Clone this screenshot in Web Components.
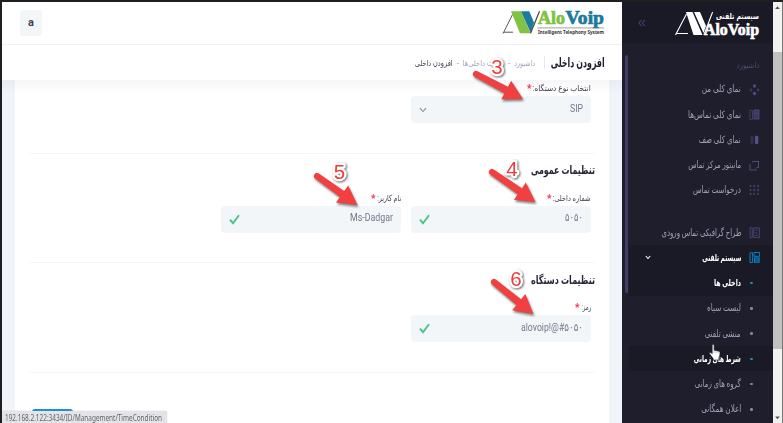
<!DOCTYPE html>
<html lang="fa"><head><meta charset="utf-8"><title>AloVoip</title>
<style>
html,body{margin:0;height:100%;overflow:hidden}
body{font-family:Roboto,"DejaVu Sans",sans-serif;background:#fff}
</style></head><body>
<app-shell></app-shell>
<script>
const define=(name,html,ready)=>customElements.define(name,class extends HTMLElement{
  connectedCallback(){
    if(this.shadowRoot)return;
    const t=document.createElement('template');
    t.innerHTML=typeof html==='function'?html(this):html;
    this.attachShadow({mode:'open'}).append(t.content.cloneNode(true));
    if(ready)ready(this);
  }
});

/* One line of text condensed to the width given in "w". */
define('fit-text',el=>`<style>
:host{display:inline-flex;flex:none;width:${el.getAttribute('w')}px;white-space:nowrap;line-height:16px;height:16px}
span{flex:none;display:block;transform-origin:${el.hasAttribute('ltr')?'left':'right'} center;direction:${el.hasAttribute('ltr')?'ltr':'rtl'}}
:host([ltr]){direction:ltr}:host(:not([ltr])){direction:rtl}
</style><span></span>`,el=>{
  const s=el.shadowRoot.querySelector('span');
  s.textContent=el.getAttribute('text');
  const n=s.getBoundingClientRect().width;
  if(n)s.style.transform=`scaleX(${+el.getAttribute('w')/n})`;
});

const icons={
  dots4:'<g fill="#4b4b80"><circle cx="5.5" cy="2" r="1.7"/><circle cx="5.5" cy="9.5" r="1.7"/><circle cx="2" cy="6" r="1.4" opacity=".6"/><circle cx="9" cy="6" r="1.4" opacity=".6"/></g>',
  phone:'<path d="M1 1.5h2.5v9H1z" fill="none" stroke="#3d3d68"/><path d="M4.5.5h6v10h-6z" fill="#45456f"/><path d="M5.5 3h4M5.5 6h4M5.5 8.2h4" stroke="#2a2a48" stroke-width=".8"/>',
  bars:'<rect x="1.5" y="2" width="3" height="8" rx="1" fill="#303052"/><rect x="6" y="1.800" width="3.300" height="8.200" rx="1.200" fill="#53538a"/>',
  copy:'<path d="M3.500 1.500h6v6h-2M3.500 1.500v1M1 4v6h6V8.500" fill="none" stroke="#4b4b78" stroke-width="1.100"/>',
  grid:'<g fill="#4b4b78">'+[1,5,9].map(y=>[1.5,5.3,9.1].map(x=>`<circle cx="${x}" cy="${y}" r=".9"/>`).join('')).join('')+'</g><path d="M1 5h9M5.300 1v9M9.100 1v9" stroke="#353558" stroke-width=".5"/>',
  flow:'<path d="M1 .8h2.300v9.700H1zM4.800.8h5.600v9.700H4.800zM6 3h3M6 5l3 2.500M6.500 8.500h2" fill="none" stroke="#47476f" stroke-width=".9"/>',
  phoneOn:'<path d="M1 .8h2.600v9.700H1z" fill="none" stroke="#087fc0"/><path d="M5 .5h5.600v3.800H5z" fill="none" stroke="#087fc0"/><path d="M5 5.300h5.700v5.500H5z" fill="#087fc0"/><path d="M6 7h3.700M6 9h3.700" stroke="#1a1a27" stroke-width=".8"/>'
};

define('nav-item',el=>{
  const ic=el.getAttribute('icon'),on=el.hasAttribute('on');
  return `<style>
:host{display:flex;align-items:center;height:25.25px;color:#a0a2b6;font-size:10px;direction:rtl;padding:0 13px 0 16px;box-sizing:border-box;flex:none}
:host([on]){color:#fff;font-weight:700;font-size:9.500px}
:host([dark]){background:#1a1a27}
.i{width:12px;height:12px;margin-left:7px;display:flex;align-items:center;justify-content:center}
.b{width:2.600px;height:2.600px;border-radius:50%;background:${on?'#0b91d8':'#8587a0'};margin-right:5px}
.c{margin-right:auto}
</style><div class="i">${ic?`<svg width="11" height="11" viewBox="0 0 11 11">${icons[ic]}</svg>`:'<div class="b"></div>'}</div>
<fit-text w="${el.getAttribute('w')}" text="${el.getAttribute('label')}"></fit-text>
${el.hasAttribute('open-menu')?'<svg class="c" width="6" height="5" viewBox="0 0 6 5"><path d="M.8 1 3 3.500 5.200 1" fill="none" stroke="#fff" stroke-width="1.100"/></svg>':''}`});

define('side-bar',`<style>
:host{display:flex;flex-direction:column;width:151px;background:#1e1e2d;box-sizing:border-box;overflow:hidden}
.brand{height:42px;flex:none;background:#1a1a27;display:flex;direction:ltr;align-items:center;padding-left:16px;border-bottom:1px solid #1c1c2a;box-sizing:border-box}
.brand .lg{margin-left:28px;overflow:visible}
.body{display:flex;direction:ltr;flex:1;min-height:0}
.track{width:3px;height:238px;margin:11px 1px 0 3px;background:#3d3d66;border-radius:2px;flex:none}
.menu{flex:1;display:flex;flex-direction:column;min-width:0;direction:rtl}
.sec{height:22px;padding:14px 14px 0 0;color:#4c4e6f;font-size:8px;flex:none;box-sizing:border-box;margin-bottom:10.700px}
.gap{height:17px;flex:none}
</style>
<div class="brand"><svg width="8" height="8" viewBox="0 0 8 8"><path d="M3.500.8.8 4l2.700 3.200M7 .8 4.300 4 7 7.200" fill="none" stroke="#4c4e80"/></svg>
<svg class="lg" width="87" height="30" viewBox="674 8 87 30">
<path d="M675.500 35 686.500 14M676 33.500h12M704 34.500 712.600 12" stroke="#fff" stroke-width="1.100" fill="none"/>
<path d="M686 12h6.500l10 23h-9zM694 12h6l6 14-2.500 7z" fill="#fff"/>
<text x="716" y="19" font-size="8.500" font-weight="700" fill="#fff" font-family="DejaVu Sans" textLength="43" lengthAdjust="spacingAndGlyphs">سیستم تلفنی</text>
<text x="704" y="34.800" font-size="16" font-weight="700" fill="#fff" stroke="#fff" stroke-width=".6" font-family="Liberation Serif" textLength="55" lengthAdjust="spacingAndGlyphs">AloVoip</text></svg></div>
<div class="body"><div class="track"></div><div class="menu">
<div class="sec"><fit-text w="23" text="داشبورد"></fit-text></div>
<nav-item icon="dots4" w="39" label="نمای کلی من"></nav-item>
<nav-item icon="phone" w="53" label="نمای کلی تماس‌ها"></nav-item>
<nav-item icon="bars" w="42" label="نمای کلی صف"></nav-item>
<nav-item icon="copy" w="53" label="مانیتور مرکز تماس"></nav-item>
<nav-item icon="grid" w="48" label="درخواست تماس"></nav-item>
<div class="gap"></div>
<nav-item icon="flow" w="80" label="طراح گرافیکی تماس ورودی"></nav-item>
<nav-item icon="phoneOn" on dark open-menu w="39" label="سیستم تلفنی"></nav-item>
<nav-item on dark w="27" label="داخلی ها"></nav-item>
<nav-item w="34" label="لیست سیاه"></nav-item>
<nav-item w="36" label="منشی تلفنی"></nav-item>
<nav-item on dark w="47" label="شرط های زمانی"></nav-item>
<nav-item w="46" label="گروه های زمانی"></nav-item>
<nav-item w="40" label="اعلان همگانی"></nav-item>
</div></div>`);

define('page-scroll',`<style>
:host{display:flex;flex-direction:column;align-items:center;width:10px;background:#f1f1f1;border-right:1px solid #777;box-sizing:border-box}
svg{flex:none}.th{width:100%;height:297px;margin-top:36px;background:#c1c1c1}.dn{margin-top:auto;margin-bottom:1px}
</style><svg width="9" height="14" viewBox="0 0 9 14"><path d="M2.200 7 4.500 4.300 6.800 7z" fill="#505050"/></svg><div class="th"></div>
<svg class="dn" width="9" height="9" viewBox="0 0 9 9"><path d="M2.200 3.500h4.600L4.500 6.200z" fill="#505050"/></svg>`);

define('top-header',`<style>
:host{display:flex;direction:rtl;justify-content:space-between;align-items:center;height:43px;flex:none;padding:0 16px 0 18px;border-bottom:1px solid #eff0f4;box-sizing:border-box;background:#fff}
svg{direction:ltr;overflow:visible}
.u{width:22px;height:26px;border-radius:3px;background:#f3f6f9;color:#3f4254;font:700 11px/25px Roboto;text-align:center}
</style><svg width="104" height="30" viewBox="502 9 104 30">
<path d="M503 34.700 512.500 15.500M504 33.200h9" stroke="#55595e" stroke-width="1" fill="none"/>
<path d="M511 12.200h10l9.500 22H520z" fill="#80c242"/><path d="M521 12.200h8.300L534 23.500l-3.500 10z" fill="#1c7a9c"/>
<path d="M530.500 34.200 539.500 12.200" stroke="#40454a" stroke-width="1.200"/>
<text x="538" y="24.500" font-family="Liberation Serif" font-weight="700" font-size="18" stroke-width=".7" fill="#80c242" stroke="#80c242" textLength="27" lengthAdjust="spacingAndGlyphs">Alo</text>
<text x="565.500" y="24.500" font-family="Liberation Serif" font-weight="700" font-size="18" stroke-width=".7" fill="#1c7a9c" stroke="#1c7a9c" textLength="38.500" lengthAdjust="spacingAndGlyphs">Voip</text>
<path d="M537.500 28.900H604" stroke="#777" stroke-width=".7"/>
<text x="538" y="34.900" font-family="Noto Sans" font-weight="700" font-size="5.600" fill="#333" textLength="66" lengthAdjust="spacingAndGlyphs">Intelligent Telephony System</text>
</svg><div class="u">a</div>`);

define('sub-header',`<style>
:host{display:flex;direction:rtl;align-items:center;height:35px;flex:none;background:#fff;padding-right:17px;font-size:8.500px;color:#a3a6ba}
.t{font-size:12.500px;font-weight:700;color:#20212f;margin-left:6px}
.s{width:1px;height:13px;background:#e6e8ef;margin-left:9px}
.d{width:10px;text-align:center;flex:none}.l{color:#3f4254}
</style><fit-text class="t" w="54" text="افزودن داخلی"></fit-text><div class="s"></div>
<fit-text w="21" text="داشبورد"></fit-text><span class="d">-</span><fit-text w="41" text="لیست داخلی‌ها"></fit-text><span class="d">-</span><fit-text class="l" w="38" text="افزودن داخلی"></fit-text>`);

define('form-field',el=>`<style>
:host{display:flex;flex-direction:column;width:180px;direction:rtl;flex:none}
.l{height:16px;display:flex;align-items:center;font-size:8.500px;color:#3f4254}
b{color:#f0304d;font-size:10px;margin-right:1.500px;height:12px;line-height:14px}
.b{height:27px;border-radius:4px;background:#f3f6f9;display:flex;align-items:center;justify-content:space-between;padding:0 8px 2px;box-sizing:border-box;color:#74788c;font-size:10.500px}
svg{position:relative;top:1px}
</style><div class="l"><fit-text w="${el.getAttribute('lw')}" text="${el.getAttribute('label')}"></fit-text><b>*</b></div>
<div class="b"><fit-text ltr w="${el.getAttribute('vw')}" text="${el.getAttribute('value')}"></fit-text>
${el.hasAttribute('select')?'<svg width="8" height="6" viewBox="0 0 8 6"><path d="M1 1.200 4 4.500 7 1.200" fill="none" stroke="#858b9c" stroke-width="1.100"/></svg>'
:'<svg width="11" height="11" viewBox="0 0 11 11"><path d="M1 5.600 4 9.200 10 1.300" fill="none" stroke="#45c486" stroke-width="1.900"/></svg>'}</div>`);

define('form-section',el=>`<style>
:host{display:block;direction:rtl;border-top:1px solid #f4f5f8;height:109.500px;box-sizing:border-box;flex:none}
:host([first]){border:0;height:72.500px}
.h{height:36px;padding-bottom:3px;box-sizing:border-box;display:flex;align-items:center;font-size:11.500px;font-weight:700;color:#252637}
.r{display:flex;gap:10px;padding-right:4px}
</style>${el.getAttribute('title-text')?`<div class="h"><fit-text w="${el.getAttribute('tw')}" text="${el.getAttribute('title-text')}"></fit-text></div>`:''}<div class="r"><slot></slot></div>`);

define('main-pane',`<style>
:host{display:flex;flex-direction:column;flex:1;min-width:0;background:#f1f4f9}
.w{flex:1;min-height:0;padding:0 13px;position:relative;overflow:hidden;display:flex}
.w::before{content:"";position:absolute;inset:0 0 auto 0;height:14px;background:linear-gradient(rgba(90,95,125,.055),transparent);z-index:1}
.card{flex:1;background:#fff;padding:0 14px;display:flex;flex-direction:column;direction:rtl;box-sizing:border-box}
.end{border-top:1px solid #f4f5f8;padding:36px 0 0 3px;direction:ltr}
.btn{width:41px;height:26px;background:#1790d8;border-radius:3px}
</style><top-header></top-header><sub-header></sub-header>
<div class="w"><div class="card">
<form-section first><form-field select label="انتخاب نوع دستگاه:" lw="58" value="SIP" vw="13"></form-field></form-section>
<form-section title-text="تنظیمات عمومی" tw="64"><form-field label="شماره داخلی:" lw="38" value="۵۰۵۰" vw="18"></form-field><form-field label="نام کاربر:" lw="24" value="Ms-Dadgar" vw="43"></form-field></form-section>
<form-section title-text="تنظیمات دستگاه" tw="64"><form-field label="رمز:" lw="10" value="alovoip!@#۵۰۵۰" vw="62"></form-field></form-section>
<div class="end"><div class="btn"></div></div>
</div></div>`);

/* Numbered callout: the figure and its arrow lie over the form.
   The arrow runs from near (3,4) to the tip (tx,ty). */
define('step-mark',el=>{
  const tx=+el.getAttribute('tx'),ty=+el.getAttribute('ty');
  const len=Math.hypot(tx-3,ty-4),ang=Math.atan2(ty-4,tx-3)*180/Math.PI;
  const h=len-19;
  return `<style>
:host{position:absolute;width:70px;height:60px;left:${el.getAttribute('x')}px;top:${el.getAttribute('y')}px;direction:ltr}
svg{display:block;overflow:visible}
.a{filter:drop-shadow(1px 2px 1px rgba(0,0,0,.5))}
.n{filter:drop-shadow(1px 1.500px 1px rgba(0,0,0,.6))}
</style><svg width="70" height="60" viewBox="0 0 70 60">
<g class="a"><path transform="translate(3 4) rotate(${ang})" d="M0-3.100 ${h} -3.700V-10.500L${len} 0 ${h} 10.500V3.700L0 3.100A3.100 3.100 0 0 1 0-3.100z" fill="#f23f40"/></g>
<text class="n" x="${el.getAttribute('nx')}" y="${el.getAttribute('ny')}" text-anchor="middle" font-family="Liberation Sans" font-size="20.500" fill="#ee3b3b" stroke="#fff" stroke-width="4.500" stroke-linejoin="round" paint-order="stroke">${el.getAttribute('n')}</text>
</svg>`});

define('link-status',`<style>
:host{position:absolute;left:2px;bottom:0;width:165px;height:12px;background:#e2e4e8;border-radius:0 3px 0 0;direction:ltr;color:#62656b;font:8.500px "Noto Sans";display:flex;align-items:center;padding:2px 0 0 3px;box-sizing:border-box;box-shadow:0 0 1px #999}
</style><fit-text ltr w="157" text="192.168.2.122:3434/ID/Management/TimeCondition"></fit-text>`);

define('hand-cursor',`<style>:host{position:absolute;left:709px;top:344px}svg{display:block}</style>
<svg width="12" height="17" viewBox="0 0 12 17"><path d="M3.200 1.500c0-1.300 1.900-1.300 1.900 0v4.700l4.600 1c1 .3 1.300.8 1.300 1.800 0 2.500-.8 3.500-1.200 4.800V16H4.200v-1.500L.8 10C0 8.800 1.200 8 2.100 8.800l1.100 1z" fill="#fff" stroke="#222" stroke-width=".6"/><path d="M5.100 6v3M7 6.800v2.300M9 7.300v2" stroke="#777" stroke-width=".4"/></svg>`);

define('app-shell',`<style>
:host{display:flex;width:783px;height:423px;position:relative;box-sizing:border-box;border-top:2px solid #1f1f21;border-left:2px solid #1f1f21;overflow:hidden}
.o{position:absolute;left:-2px;top:-2px;width:783px;height:423px;pointer-events:none}
side-bar,page-scroll{flex:none}
</style><main-pane></main-pane><side-bar></side-bar><page-scroll></page-scroll>
<div class="o"><step-mark n="3" x="473" y="70" tx="50" ty="29" nx="24" ny="3.500"></step-mark>
<step-mark n="4" x="489" y="168" tx="46.500" ty="34" nx="23" ny="7.500"></step-mark>
<step-mark n="5" x="314" y="172" tx="43.500" ty="33" nx="25.500" ny="6.500"></step-mark>
<step-mark n="6" x="491" y="278" tx="42.500" ty="36" nx="25" ny="8"></step-mark>
<link-status></link-status><hand-cursor></hand-cursor></div>`);
</script></body></html>
